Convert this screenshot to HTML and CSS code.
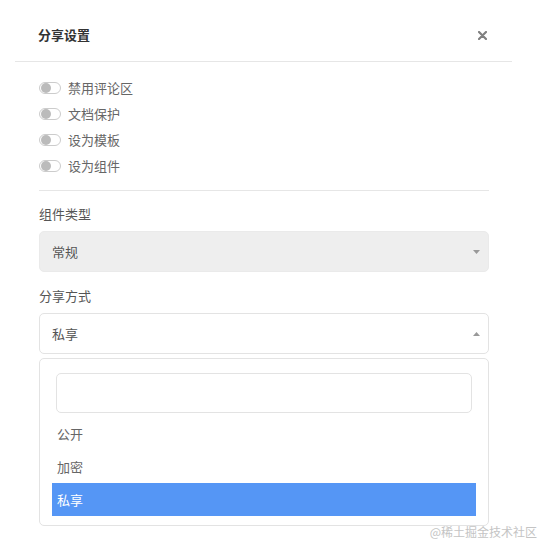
FILE: index.html
```html
<!DOCTYPE html>
<html lang="zh">
<head>
<meta charset="utf-8">
<link rel="stylesheet" href="styles.css">
</head>
<body>
<div class="dialog">
  <div class="header">
    <span class="title">分享设置</span>
    <svg class="close" width="9" height="9" viewBox="0 0 9 9"><path d="M1 1L8 8M8 1L1 8" stroke="#808080" stroke-width="2.2" stroke-linecap="round"/></svg>
  </div>
  <div class="content">
    <div class="toggles">
      <div class="toggle-row"><span class="switch"><span class="knob"></span></span><span class="toggle-text">禁用评论区</span></div>
      <div class="toggle-row"><span class="switch"><span class="knob"></span></span><span class="toggle-text">文档保护</span></div>
      <div class="toggle-row"><span class="switch"><span class="knob"></span></span><span class="toggle-text">设为模板</span></div>
      <div class="toggle-row"><span class="switch"><span class="knob"></span></span><span class="toggle-text">设为组件</span></div>
    </div>
    <div class="divider"></div>
    <div class="field first">
      <div class="label">组件类型</div>
      <div class="select disabled">
        <span>常规</span>
        <svg width="7" height="4" viewBox="0 0 7 4"><path d="M0 0H7L3.5 4Z" fill="#999"/></svg>
      </div>
    </div>
    <div class="field">
      <div class="label">分享方式</div>
      <div class="select open">
        <span>私享</span>
        <svg width="7" height="4" viewBox="0 0 7 4"><path d="M0 4H7L3.5 0Z" fill="#999"/></svg>
      </div>
      <div class="dropdown">
        <div class="search"></div>
        <div class="options">
          <div class="option">公开</div>
          <div class="option">加密</div>
          <div class="option selected">私享</div>
        </div>
      </div>
    </div>
  </div>
</div>
<div class="watermark">@稀土掘金技术社区</div>
</body>
</html>
```
FILE: styles.css
```css
* { box-sizing: border-box; }
html, body { margin: 0; padding: 0; background: #fff; }
body {
  font-family: "Noto Sans CJK SC", "Noto Sans", sans-serif;
  font-size: 13px;
  color: #555;
  width: 540px;
  height: 543px;
  overflow: hidden;
  position: relative;
}
.dialog {
  margin-left: 15px;
  width: 497px;
}
.header {
  height: 62px;
  padding: 25px 25px 0 23px;
  border-bottom: 1px solid #e6e6e6;
  display: flex;
  justify-content: space-between;
  align-items: flex-start;
}
.title {
  font-weight: bold;
  color: #333;
  font-size: 13px;
  line-height: 20px;
}
.close { margin-top: 6px; }
.content {
  padding: 0 23px 0 24px;
}
.toggles {
  padding-top: 13px;
}
.toggle-row {
  height: 26px;
  display: flex;
  align-items: center;
}
.switch {
  width: 22px;
  height: 12px;
  border: 1px solid #ccc;
  border-radius: 6px;
  position: relative;
  display: flex;
  align-items: center;
  padding-left: 1px;
  margin-right: 7px;
}
.knob {
  width: 10px;
  height: 10px;
  border-radius: 50%;
  background: #bbb;
}
.toggle-text {
  color: #666;
  line-height: 20px;
}
.divider {
  margin-top: 11px;
  height: 1px;
  background: #e6e6e6;
}
.field { margin-top: 14px; }
.field.first { margin-top: 13px; }
.label {
  line-height: 20px;
  color: #555;
  margin-bottom: 7px;
}
.select {
  height: 41px;
  border: 1px solid #e3e3e3;
  border-radius: 5px;
  display: flex;
  align-items: center;
  justify-content: space-between;
  padding: 0 8px 0 12px;
  color: #555;
}
.select.disabled {
  background: #eee;
  border-color: #eaeaea;
}
.dropdown {
  margin-top: 4px;
  border: 1px solid #e3e3e3;
  border-radius: 5px;
  padding: 14px 12px 9px 12px;
}
.search {
  height: 40px;
  margin: 0 4px 4px;
  border: 1px solid #e3e3e3;
  border-radius: 5px;
}
.option {
  height: 33px;
  line-height: 33px;
  padding-left: 5px;
  color: #666;
}
.option.selected {
  background: #5596f5;
  color: #fff;
}
.watermark {
  position: absolute;
  right: 3px;
  bottom: 2px;
  font-size: 12px;
  color: #c4c4c4;
  line-height: 18px;
}
```
